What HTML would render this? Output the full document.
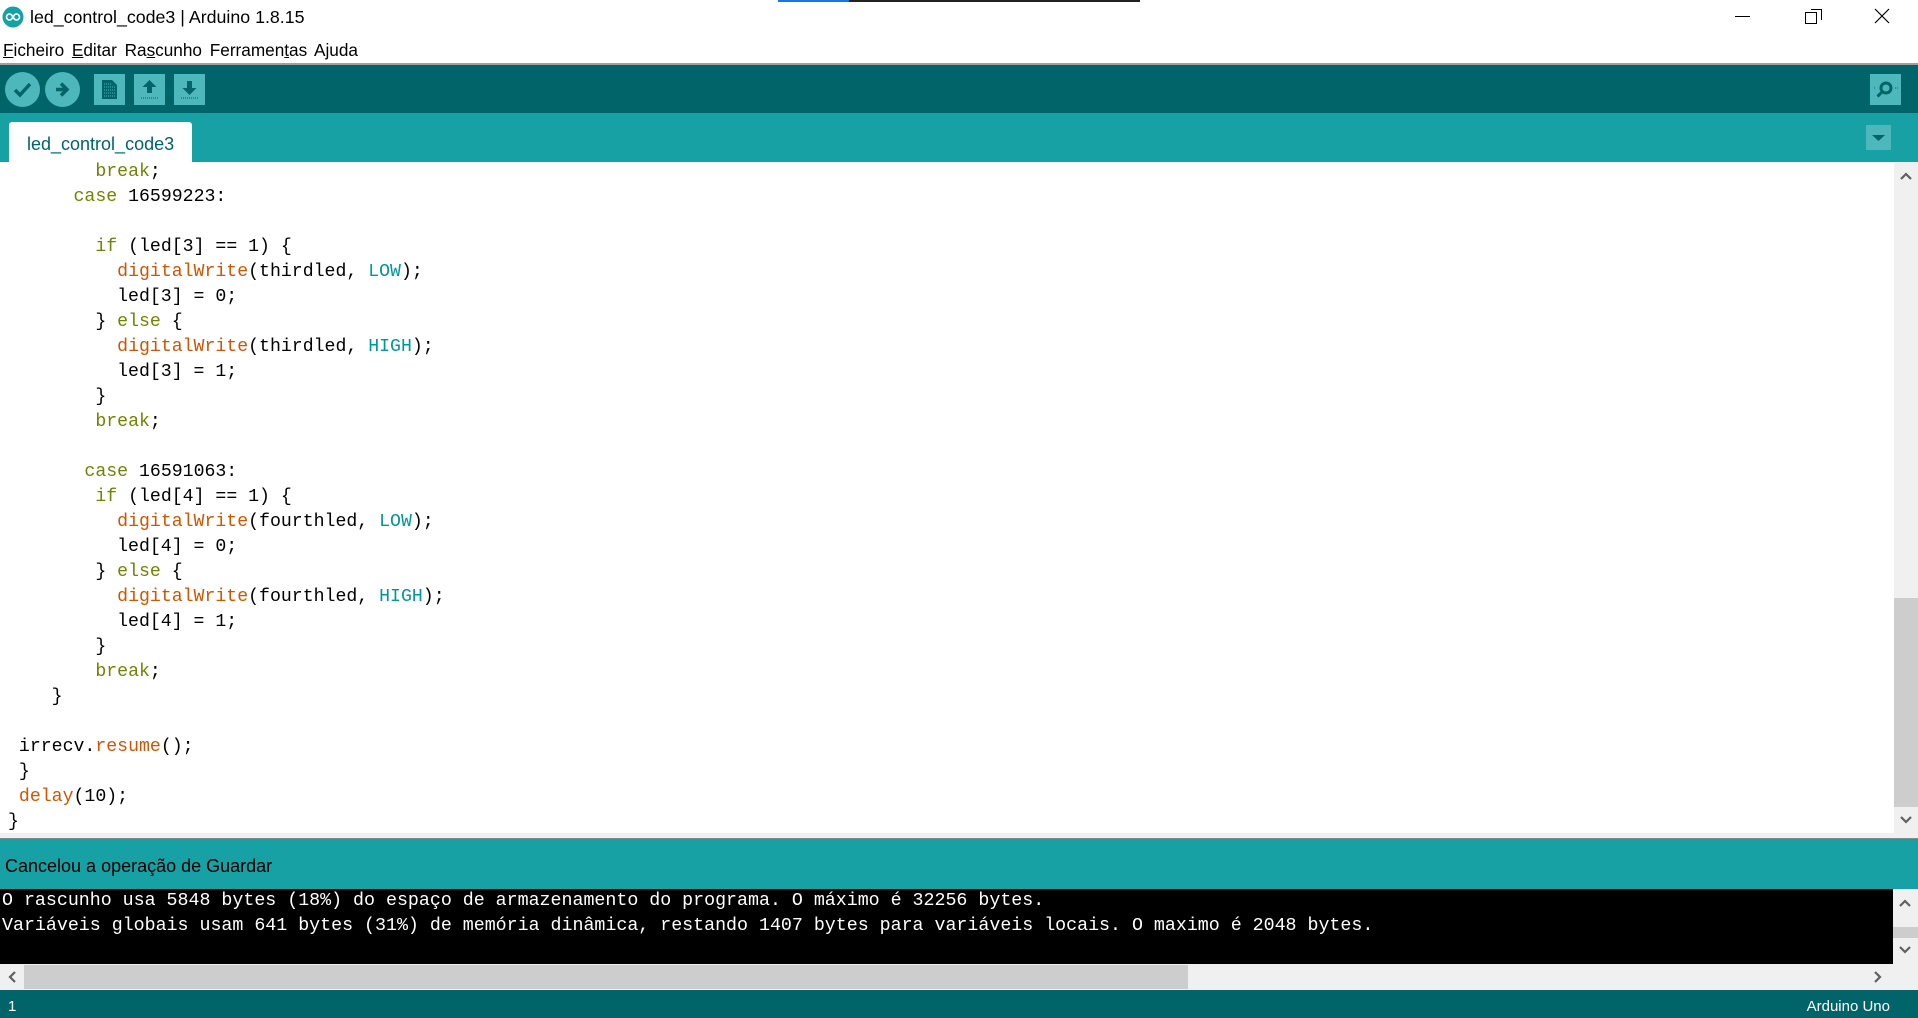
<!DOCTYPE html>
<html><head><meta charset="utf-8"><style>
*{margin:0;padding:0;box-sizing:border-box}
body{width:1918px;height:1018px;overflow:hidden;background:#fff;font-family:"Liberation Sans",sans-serif;position:relative}
.abs{position:absolute}
.mono{font-family:"Liberation Mono",monospace;font-size:18.2px;white-space:pre}
.k{color:#6f8500}.f{color:#d35400}.c{color:#00979c}
.btn{position:absolute;background:#4db7bb}
</style></head><body>
<div class="abs" style="left:778px;top:0;width:71px;height:2px;background:#1a73e8"></div>
<div class="abs" style="left:849px;top:0;width:291px;height:2px;background:#222"></div>
<svg class="abs" style="left:2px;top:6px" width="22" height="22" viewBox="0 0 22 22"><circle cx="11" cy="11" r="10.5" fill="#17a1a5"/><circle cx="7.5" cy="11" r="3" fill="none" stroke="#fff" stroke-width="1.6"/><circle cx="14.5" cy="11" r="3" fill="none" stroke="#fff" stroke-width="1.6"/></svg>
<div class="abs" style="left:30px;top:7px;font-size:17.8px;color:#000">led_control_code3 | Arduino 1.8.15</div>
<div class="abs" style="left:1735px;top:16px;width:15px;height:1px;background:#000"></div>
<div class="abs" style="left:1808px;top:10px;width:11px;height:11px;border:1px solid #000;border-left:0;border-bottom:0;transform:translate(3px,-1px)"></div>
<div class="abs" style="left:1805px;top:12px;width:12px;height:12px;border:1px solid #000;background:#fff"></div>
<svg class="abs" style="left:1874px;top:8px" width="16" height="16"><path d="M1 1L15 15M15 1L1 15" stroke="#000" stroke-width="1.2"/></svg>
<div class="abs" style="left:3px;top:40px;font-size:17.2px;color:#000;word-spacing:3px"><u>F</u>icheiro <u>E</u>ditar Ra<u>s</u>cunho Ferramen<u>t</u>as Ajuda</div>
<div class="abs" style="left:0;top:63px;width:1918px;height:2px;background:#a0a0a0"></div>
<div class="abs" style="left:0;top:65px;width:1918px;height:48px;background:#006468"></div>
<div class="btn" style="left:5px;top:72px;width:35px;height:35px;border-radius:50%"></div>
<div class="btn" style="left:45px;top:72px;width:35px;height:35px;border-radius:50%"></div>
<svg class="abs" style="left:5px;top:72px" width="35" height="35"><path d="M10 18l5 5 10-11" stroke="#006468" stroke-width="3.5" fill="none"/></svg>
<svg class="abs" style="left:45px;top:72px" width="35" height="35"><path d="M11 17.5h10M16 11.5l6 6-6 6" stroke="#006468" stroke-width="3.5" fill="none"/></svg>
<div class="btn" style="left:94px;top:74px;width:31px;height:31px"></div>
<svg class="abs" style="left:94px;top:74px" width="31" height="31"><path d="M8 6h10l5 5v14H8z" fill="#006468"/><path d="M10 10h7M10 13h11M10 16h11M10 19h11M10 22h11" stroke="#4db7bb" stroke-width="1" stroke-dasharray="1 1"/></svg>
<div class="btn" style="left:134px;top:74px;width:31px;height:31px"></div>
<svg class="abs" style="left:134px;top:74px" width="31" height="31"><path d="M15.5 6l-7 7h4.5v6h5v-6h4.5z" fill="#006468"/><path d="M7 24h17" stroke="#006468" stroke-width="1" stroke-dasharray="1 1"/></svg>
<div class="btn" style="left:174px;top:74px;width:31px;height:31px"></div>
<svg class="abs" style="left:174px;top:74px" width="31" height="31"><path d="M15.5 21l-7-7h4.5V7h5v7h4.5z" fill="#006468"/><path d="M7 24h17" stroke="#006468" stroke-width="1" stroke-dasharray="1 1"/></svg>
<div class="btn" style="left:1870px;top:74px;width:31px;height:31px"></div>
<svg class="abs" style="left:1870px;top:74px" width="31" height="31"><circle cx="16" cy="14" r="5" fill="none" stroke="#006468" stroke-width="3"/><path d="M12.5 17.5l-5 5" stroke="#006468" stroke-width="3"/><path d="M4 14h2M25 14h3" stroke="#006468" stroke-width="1" stroke-dasharray="1 1"/></svg>
<div class="abs" style="left:0;top:113px;width:1918px;height:49px;background:#17a1a5"></div>
<div class="abs" style="left:9px;top:122px;width:183px;height:40px;background:#fff;border-radius:3px 3px 0 0"></div>
<div class="abs" style="left:27px;top:134px;font-size:18px;color:#006468">led_control_code3</div>
<div class="abs" style="left:1866px;top:125px;width:25px;height:25px;background:#4db7bb"></div>
<svg class="abs" style="left:1866px;top:125px" width="25" height="25"><path d="M6 10h13l-6.5 6z" fill="#006468"/></svg>
<div class="abs" style="left:0;top:162px;width:1894px;height:671px;overflow:hidden;background:#fff">
<div class="mono" style="position:absolute;left:8px;top:-2px;line-height:25px;color:#000">        <span class="k">break</span>;
      <span class="k">case</span> 16599223:

        <span class="k">if</span> (led[3] == 1) {
          <span class="f">digitalWrite</span>(thirdled, <span class="c">LOW</span>);
          led[3] = 0;
        } <span class="k">else</span> {
          <span class="f">digitalWrite</span>(thirdled, <span class="c">HIGH</span>);
          led[3] = 1;
        }
        <span class="k">break</span>;

       <span class="k">case</span> 16591063:
        <span class="k">if</span> (led[4] == 1) {
          <span class="f">digitalWrite</span>(fourthled, <span class="c">LOW</span>);
          led[4] = 0;
        } <span class="k">else</span> {
          <span class="f">digitalWrite</span>(fourthled, <span class="c">HIGH</span>);
          led[4] = 1;
        }
        <span class="k">break</span>;
    }

 irrecv.<span class="f">resume</span>();
 }
 <span class="f">delay</span>(10);
}</div></div>
<div class="abs" style="left:1894px;top:162px;width:24px;height:671px;background:#f0f0f0"></div>
<div class="abs" style="left:1894px;top:598px;width:24px;height:209px;background:#cdcdcd"></div>
<svg class="abs" style="left:1894px;top:166px" width="24" height="20"><path d="M7 13l5-5 5 5" stroke="#606060" stroke-width="2.2" fill="none"/></svg>
<svg class="abs" style="left:1894px;top:810px" width="24" height="20"><path d="M7 7l5 5 5-5" stroke="#606060" stroke-width="2.2" fill="none"/></svg>
<div class="abs" style="left:0;top:833px;width:1918px;height:5px;background:#f0f0f0"></div>
<div class="abs" style="left:0;top:838px;width:1918px;height:1px;background:#888"></div>
<div class="abs" style="left:0;top:839px;width:1918px;height:50px;background:#17a1a5"></div>
<div class="abs" style="left:5px;top:856px;font-size:18px;color:#000">Cancelou a operação de Guardar</div>
<div class="abs" style="left:0;top:889px;width:1893px;height:75px;background:#000"></div>
<div class="mono" style="position:absolute;left:2px;top:889px;line-height:25px;color:#fff;font-size:18.3px">O rascunho usa 5848 bytes (18%) do espaço de armazenamento do programa. O máximo é 32256 bytes.
Variáveis globais usam 641 bytes (31%) de memória dinâmica, restando 1407 bytes para variáveis locais. O maximo é 2048 bytes.</div>
<div class="abs" style="left:1893px;top:889px;width:25px;height:75px;background:#f0f0f0"></div>
<div class="abs" style="left:1893px;top:927px;width:25px;height:11px;background:#cdcdcd"></div>
<svg class="abs" style="left:1893px;top:893px" width="25" height="20"><path d="M7 13l5-5 5 5" stroke="#606060" stroke-width="2.2" fill="none"/></svg>
<svg class="abs" style="left:1893px;top:940px" width="25" height="20"><path d="M7 7l5 5 5-5" stroke="#606060" stroke-width="2.2" fill="none"/></svg>
<div class="abs" style="left:0;top:964px;width:1918px;height:26px;background:#f0f0f0"></div>
<div class="abs" style="left:24px;top:965px;width:1164px;height:24px;background:#cdcdcd"></div>
<svg class="abs" style="left:2px;top:967px" width="20" height="20"><path d="M13 5l-5 5 5 5" stroke="#606060" stroke-width="2.2" fill="none"/></svg>
<svg class="abs" style="left:1868px;top:967px" width="20" height="20"><path d="M7 5l5 5-5 5" stroke="#606060" stroke-width="2.2" fill="none"/></svg>
<div class="abs" style="left:0;top:990px;width:1918px;height:28px;background:#006468"></div>
<div class="abs" style="left:8px;top:998px;font-size:15px;color:#fff">1</div>
<div class="abs" style="right:28px;top:998px;font-size:15px;color:#fff">Arduino Uno</div>
</body></html>
